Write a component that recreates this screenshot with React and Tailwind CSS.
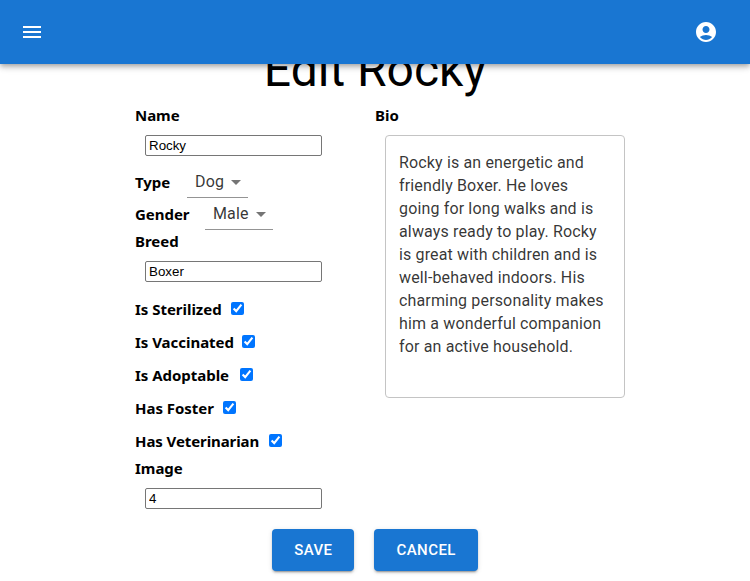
import React from "react";

const label = "shrink-0 whitespace-nowrap font-['Segoe_UI','Noto_Sans',sans-serif] text-[15px] leading-[21px] font-bold tracking-[-0.03px]";
const field = "ml-[10px] block h-[21px] w-[177px] rounded-[2px] border border-[#767676] bg-white px-[3px] py-0 font-['Liberation_Sans',Arial,sans-serif] text-[13.333px] leading-[17px] text-black outline-none";

const flags = [
  { text: "Is Sterilized", width: "w-[86px]" },
  { text: "Is Vaccinated", width: "w-[97px]" },
  { text: "Is Adoptable", width: "w-[95px]" },
  { text: "Has Foster", width: "w-[78px]" },
  { text: "Has Veterinarian", width: "w-[124px] tracking-[-0.09px]" },
];

function Select({ value, width }) {
  return (
    <div className={`${width} flex h-[31px] items-start justify-between border-b border-[#949494] pt-[3px] pr-[7px] pl-2`}>
      <span className="text-[16px] leading-[23px] tracking-[0.15px] text-black/80">{value}</span>
      <svg className="mt-[10px] h-[5px] w-[10px] shrink-0" viewBox="0 0 10 5" fill="#757575"><path d="M0 0l5 5 5-5z" /></svg>
    </div>
  );
}

function Check({ text, width }) {
  return (
    <div className="flex h-[33px] items-center">
      <span className={`${label} ${width}`}>{text}</span>
      <input type="checkbox" defaultChecked className="-mt-[2px] ml-[10px] h-[13px] w-[13px]" />
    </div>
  );
}

export default function App() {
  return (
    <div className="flex h-[581px] w-[750px] flex-col overflow-hidden bg-white font-[Roboto,sans-serif] text-black">
      <header className="z-10 flex h-16 shrink-0 items-center justify-between bg-[#1976d2] px-5 shadow-[0_2px_4px_-1px_rgba(0,0,0,0.2),0_4px_5px_rgba(0,0,0,0.14),0_1px_10px_rgba(0,0,0,0.12)]">
        <svg className="h-6 w-6" viewBox="0 0 24 24" fill="white"><path d="M3 18h18v-2H3zm0-5h18v-2H3zm0-7v2h18V6z" /></svg>
        <svg className="mr-3 h-6 w-6" viewBox="0 0 24 24" fill="white"><path d="M12 2C6.48 2 2 6.48 2 12s4.48 10 10 10 10-4.48 10-10S17.52 2 12 2m0 4c1.93 0 3.5 1.57 3.5 3.5S13.93 13 12 13s-3.5-1.57-3.5-3.5S10.07 6 12 6m0 14c-2.03 0-4.43-.82-6.14-2.88C7.55 15.8 9.68 15 12 15s4.45.8 6.14 2.12C16.43 19.18 14.03 20 12 20" /></svg>
      </header>
      <h1 className="-mt-[22px] h-[62px] text-center text-[48px] leading-[56px] font-normal">Edit Rocky</h1>
      <main className="ml-[135px] flex w-[490px] items-start">
        <form className="w-[240px] pt-[1px]">
          <div className={label}>Name</div>
          <input className={`mt-[9px] ${field}`} defaultValue="Rocky" />
          <div className="mt-[11px] flex h-[31px] items-start"><span className={`mt-[5px] w-[52px] ${label}`}>Type</span><Select value="Dog" width="w-[61px]" /></div>
          <div className="mt-[1px] flex h-[31px] items-start"><span className={`mt-[5px] w-[70px] ${label}`}>Gender</span><Select value="Male" width="w-[68px]" /></div>
          <div className={`mt-[1px] ${label}`}>Breed</div>
          <input className={`mt-[9px] ${field}`} defaultValue="Boxer" />
          <div className="mt-[11px]">
            {flags.map((flag) => <Check key={flag.text} text={flag.text} width={flag.width} />)}
          </div>
          <div className={label}>Image</div>
          <input className={`mt-[9px] ${field}`} defaultValue="4" />
        </form>
        <section className="w-[250px] pt-[1px]">
          <div className={label}>Bio</div>
          <div className="mt-[9px] ml-[10px] h-[263px] w-[240px] rounded border border-[#c4c4c4] px-[13px] pt-[14.5px] text-[16px] leading-[23px] tracking-[0.15px] text-black/80">
            Rocky is an energetic and<br />friendly Boxer. He loves<br />going for long walks and is<br />always ready to play. Rocky<br />is great with children and is<br />well-behaved indoors. His<br />charming personality makes<br />him a wonderful companion<br />for an active household.
          </div>
        </section>
      </main>
      <div className="mt-5 flex justify-center gap-5">
        {["SAVE", "CANCEL"].map((text) => (
          <button key={text} className="h-[42px] rounded bg-[#1976d2] px-[22px] text-[15px] font-medium tracking-[0.43px] text-white shadow-[0_3px_1px_-2px_rgba(0,0,0,0.2),0_2px_2px_rgba(0,0,0,0.14),0_1px_5px_rgba(0,0,0,0.12)]">{text}</button>
        ))}
      </div>
    </div>
  );
}
